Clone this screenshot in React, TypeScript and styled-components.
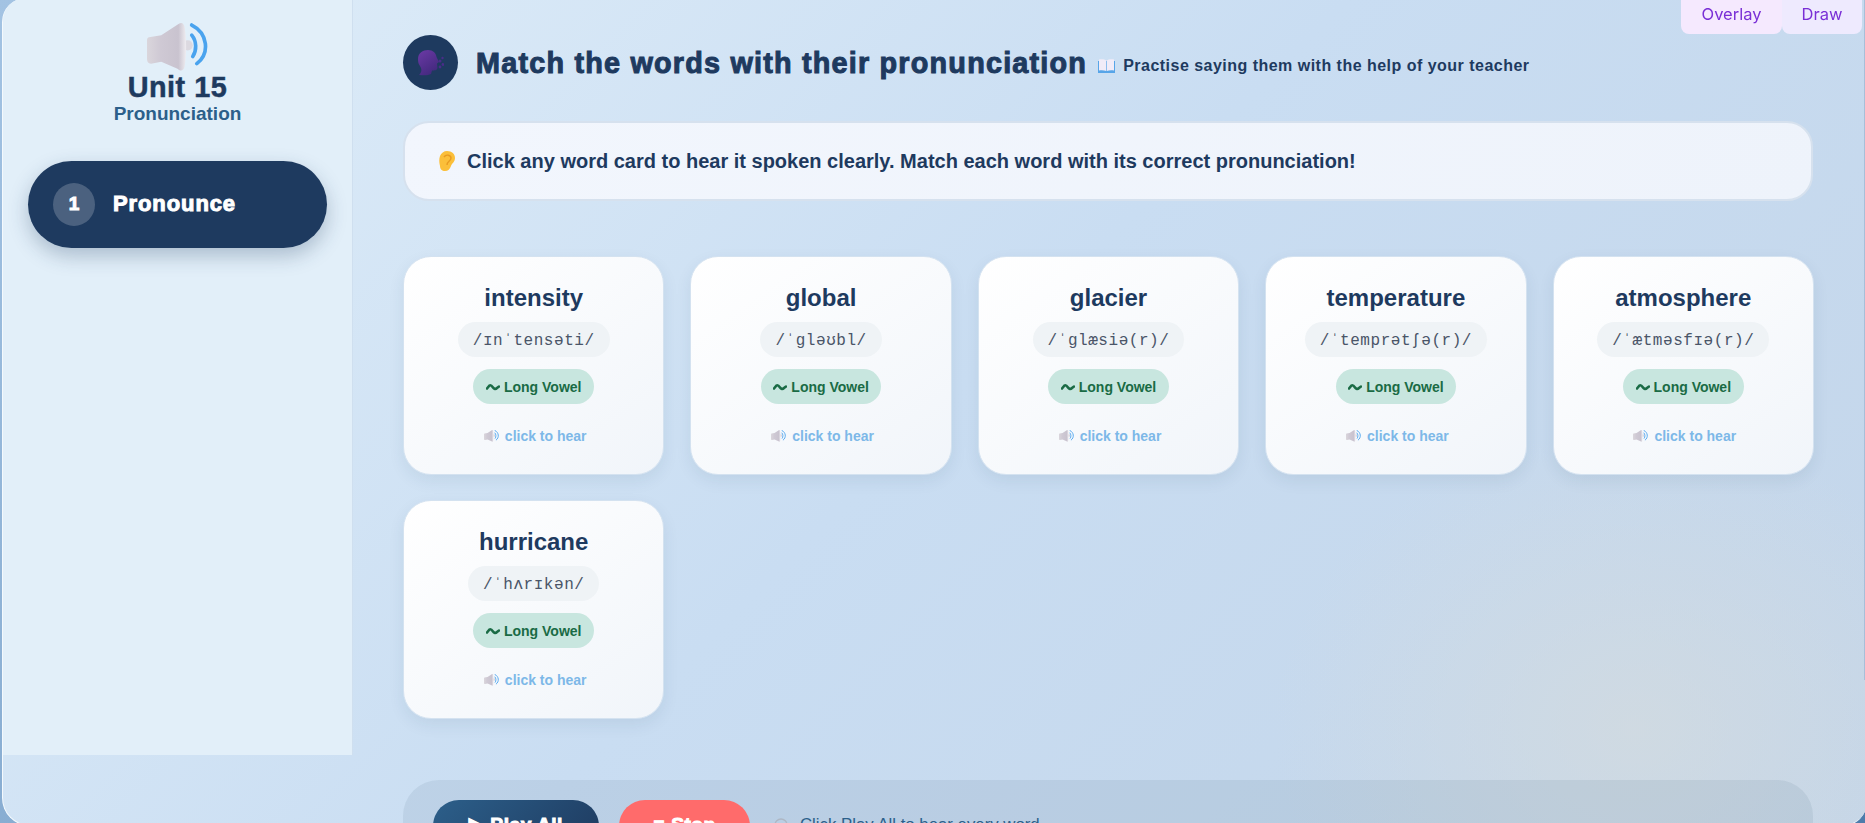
import React from 'react';
import styled, { createGlobalStyle, css } from 'styled-components';

const WORDS = [
  { word: 'intensity', ipa: '/ɪnˈtensəti/' },
  { word: 'global', ipa: '/ˈɡləʊbl/' },
  { word: 'glacier', ipa: '/ˈɡlæsiə(r)/' },
  { word: 'temperature', ipa: '/ˈtemprətʃə(r)/' },
  { word: 'atmosphere', ipa: '/ˈætməsfɪə(r)/' },
  { word: 'hurricane', ipa: '/ˈhʌrɪkən/' },
];

const GlobalStyle = createGlobalStyle`
  html, body {
    margin: 0;
    height: 823px;
    overflow: hidden;
    background: linear-gradient(135deg, #a3c3e3 0%, #4d7cab 100%);
    font-family: "Liberation Sans", Arial, sans-serif;
    color: #1e3a5f;
  }
`;

// the reference uses a black weight that falls back to a thickened bold
const heavy = css`
  font-weight: 700;
  -webkit-text-stroke: 1px currentColor;
`;

const Shell = styled.div`
  position: relative;
  display: flex;
  align-items: flex-start;
  box-sizing: border-box;
  width: 1865px;
  height: 828px;
  margin: -2px 0 0 2px;
  overflow: hidden;
  border-left: 1px solid #f4f9fd;
  border-bottom: 1px solid #f4f9fd;
  border-radius: 24px 6px 24px 28px;
  background:
    radial-gradient(ellipse 360px 300px at 1630px 730px, rgba(212, 219, 222, 0.7), rgba(212, 219, 222, 0) 100%),
    linear-gradient(135deg, #e0eef9 0%, #c9ddf2 50%, #c3d5e9 100%);

  &::after {
    content: '';
    position: absolute;
    top: 0;
    right: 2px;
    width: 1px;
    height: 682px;
    background: #a7bfd9;
  }
`;

const Sidebar = styled.aside`
  flex: none;
  box-sizing: border-box;
  width: 350px;
  height: 757px;
  padding: 25px 25px 0;
  border-right: 1px solid #cfdfef;
  background: #e2eff9;
`;

const Brand = styled.div`
  display: flex;
  flex-direction: column;
  align-items: center;
  margin-bottom: 36px;
`;

const UnitTitle = styled.h2`
  margin: 2px 0 0;
  font-size: 28.8px;
  line-height: 28px;
  letter-spacing: 0.5px;
  font-weight: 700;
  -webkit-text-stroke: 0.5px currentColor;
  color: #1e3a5f;
`;

const UnitSub = styled.div`
  margin-top: 2px;
  font-size: 19px;
  line-height: 22px;
  font-weight: 700;
  color: #2c5f8a;
`;

const NavPill = styled.div`
  display: flex;
  align-items: center;
  gap: 18px;
  box-sizing: border-box;
  width: 299px;
  height: 87px;
  padding-left: 25px;
  border-radius: 44px;
  background: #1e3a5f;
  box-shadow: 0 8px 20px rgba(30, 58, 95, 0.28);
  color: #fff;
`;

const NavNumber = styled.span`
  display: flex;
  align-items: center;
  justify-content: center;
  width: 42px;
  height: 43px;
  border-radius: 50%;
  background: rgba(255, 255, 255, 0.2);
  font-size: 19px;
  ${heavy}
`;

const NavLabel = styled.span`
  font-size: 22px;
  letter-spacing: 0.9px;
  ${heavy}
`;

const Main = styled.main`
  flex: 1;
  min-width: 0;
  padding: 37px 54px 0 50px;
`;

const TitleRow = styled.header`
  display: flex;
  align-items: center;
  height: 55px;
  margin-bottom: 31px;
`;

const TitleBadge = styled.span`
  display: flex;
  align-items: center;
  justify-content: center;
  flex: none;
  width: 55px;
  height: 55px;
  margin-right: 18px;
  border-radius: 50%;
  background: #1e3a5f;
`;

const Title = styled.h1`
  margin: 0 11px 0 0;
  font-size: 28.8px;
  line-height: 34px;
  letter-spacing: 1.2px;
  ${heavy}
`;

const Subtitle = styled.span`
  display: flex;
  align-items: center;
  gap: 8px;
  margin-top: 7px;
  font-size: 16px;
  font-weight: 700;
  letter-spacing: 0.48px;
`;

const InfoBox = styled.div`
  display: flex;
  align-items: center;
  gap: 12px;
  box-sizing: border-box;
  height: 80px;
  margin-bottom: 55px;
  padding-left: 34px;
  border: 2px solid #d6e1ee;
  border-radius: 26px;
  background: linear-gradient(135deg, #f2f6fd 0%, #eef3fb 100%);
  font-size: 20px;
  font-weight: 700;
`;

const CardGrid = styled.div`
  display: grid;
  grid-template-columns: repeat(5, 1fr);
  gap: 25px 26px;
  margin: 0 -1px 61px 0;
`;

const Card = styled.article`
  display: flex;
  flex-direction: column;
  align-items: center;
  box-sizing: border-box;
  height: 219px;
  padding-top: 27px;
  border: 1.5px solid #d4e2f0;
  border-radius: 28px;
  background: linear-gradient(145deg, #ffffff 0%, #f1f5fa 100%);
  box-shadow: 0 6px 16px rgba(30, 58, 95, 0.08);
`;

const Word = styled.div`
  font-size: 24px;
  line-height: 28px;
  font-weight: 700;
  color: #1e3a5f;
`;

const Phonetic = styled.div`
  display: flex;
  align-items: center;
  box-sizing: border-box;
  height: 35px;
  margin-top: 10px;
  padding: 2px 15px 0;
  border-radius: 18px;
  background: #eff3f6;
  font-family: "Liberation Mono", "DejaVu Sans Mono", monospace;
  font-size: 16px;
  letter-spacing: 0.55px;
  color: #4a5568;
`;

const TypeBadge = styled.div`
  display: flex;
  align-items: center;
  gap: 4px;
  height: 35px;
  margin-top: 12px;
  padding: 0 12.5px;
  border-radius: 18px;
  background: #c8e6df;
  font-size: 14px;
  font-weight: 700;
  color: #1a6b45;
`;

const Hear = styled.div`
  display: flex;
  align-items: center;
  gap: 6px;
  margin-top: 24px;
  padding-left: 3px;
  font-size: 14px;
  line-height: 16px;
  font-weight: 700;
  color: #7db8e8;
`;

const ControlBar = styled.div`
  display: flex;
  align-items: flex-start;
  gap: 20px;
  box-sizing: border-box;
  height: 90px;
  padding: 20px 30px;
  border-radius: 36px;
  background: rgba(30, 58, 95, 0.08);
`;

const PlayButton = styled.button<{ $stop?: boolean }>`
  width: ${p => (p.$stop ? '131px' : '166px')};
  height: 52px;
  padding: 0 0 3px;
  border: none;
  border-radius: 26px;
  background: ${p => (p.$stop ? '#ff6b6b' : 'linear-gradient(135deg, #2c5f8a 0%, #1e3a5f 100%)')};
  font-family: inherit;
  font-size: 19.2px;
  letter-spacing: 0.5px;
  color: #fff;
  ${heavy}
`;

const Hint = styled.span`
  display: flex;
  align-items: center;
  gap: 12px;
  margin: 15px 0 0 4px;
  font-size: 16.8px;
  line-height: 20px;
  color: #2c5f8a;
`;

const TopTab = styled.button<{ $tint: string; $width: number }>`
  width: ${p => p.$width}px;
  height: 34px;
  padding: 0 0 6px;
  border: none;
  border-radius: 0 0 8px 8px;
  background: ${p => p.$tint};
  font-family: Inter, sans-serif;
  font-size: 16.5px;
  color: #7a2fd6;
`;

const TopTabs = styled.div`
  position: fixed;
  top: 0;
  right: 3px;
  display: flex;
`;

const SpeakerIcon = ({ size }: { size: number }) => (
  <svg width={size} height={(size * 47) / 60} viewBox="0 0 60 47" aria-hidden="true">
    <defs>
      <linearGradient id="cone" x1="0" y1="0" x2="1" y2="0">
        <stop offset="0" stopColor="#dad6dc" />
        <stop offset="0.35" stopColor="#cfc9d4" />
        <stop offset="0.8" stopColor="#c9c3cf" />
        <stop offset="1" stopColor="#efedf1" />
      </linearGradient>
    </defs>
    <circle cx="40" cy="22" r="5" fill="#dcd9e0" />
    <path
      d="M2 14 L14 12 L31 1 C34 -1 36 0 37 4 C39 16 39 30 37 43 C36 47 33 48 30 45 L14 38 L4 40 C1 40 0 38 0 35 L0 17 C0 15 1 14 2 14 Z"
      fill="url(#cone)"
    />
    <path d="M44 12 C49 18 49 27 45 33" fill="none" stroke="#4aa3ee" strokeWidth="3.6" strokeLinecap="round" />
    <path d="M44 2 C60 10 62 30 49 40" fill="none" stroke="#4aa3ee" strokeWidth="3.6" strokeLinecap="round" />
  </svg>
);

const SpeakingHead = () => (
  <svg width="27" height="26" viewBox="0 0 27 26" aria-hidden="true">
    <defs>
      <linearGradient id="head" x1="0" y1="0" x2="0.6" y2="1">
        <stop offset="0" stopColor="#6c3aa6" />
        <stop offset="1" stopColor="#43297e" />
      </linearGradient>
    </defs>
    <path
      d="M1 9 C1 3 6 0 11 0 C16 0 19 3 19.5 7 L22 12 L20 13.5 L20.5 18 C20 20.5 17 20.5 15 20.5 L14 24 C10 26 6 25 2 25 C5 22 5 19 3 16 C1.5 14 1 12 1 9 Z"
      fill="url(#head)"
    />
    <circle cx="23" cy="11" r="1.5" fill="#4a2c8a" />
    <circle cx="26" cy="14.5" r="1.4" fill="#4a2c8a" />
    <circle cx="23" cy="17" r="1.4" fill="#4a2c8a" />
    <circle cx="25.5" cy="8" r="1.2" fill="#4a2c8a" />
  </svg>
);

const EarIcon = () => (
  <svg width="16" height="20" viewBox="0 0 16 20" aria-hidden="true">
    <path
      d="M8 0 C13 0 16 3 16 7 C16 11 13 12 12 15 C11 18 9 20 6 20 C3 20 1 18 1 15 C0 11 0 8 1 5 C2 2 5 0 8 0 Z"
      fill="#fbbf3a"
    />
    <path d="M5 6 C7 3 12 4 12 7 C12 10 8 10 8 14" fill="none" stroke="#e89b22" strokeWidth="1.4" />
  </svg>
);

const BookIcon = () => (
  <svg width="17" height="14" viewBox="0 0 17 14" aria-hidden="true">
    <path d="M0 2 L0 14 L17 14 L17 2 Z" fill="#57a5e8" />
    <path d="M1 0.5 C4 0 7 0.5 8.2 1.5 L8.2 12 C6 11 3 11 1 11.5 Z" fill="#f1ecf8" />
    <path d="M16 0.5 C13 0 10 0.5 8.8 1.5 L8.8 12 C11 11 14 11 16 11.5 Z" fill="#f1ecf8" />
  </svg>
);

const WaveIcon = () => (
  <svg width="14" height="8" viewBox="0 0 14 8" aria-hidden="true">
    <path d="M1 5.5 L3.5 2.5 C5 1.5 6 3 7 4.5 C8 6 9.5 6.5 11 5 L13 3.5" fill="none" stroke="#1a6b45" strokeWidth="2.6" strokeLinecap="round" />
  </svg>
);

const HintIcon = () => (
  <svg width="14" height="14" viewBox="0 0 14 14" aria-hidden="true">
    <circle cx="7" cy="7" r="6" fill="none" stroke="#aeb7c4" strokeWidth="1.4" />
  </svg>
);

export default function App() {
  return (
    <>
      <GlobalStyle />
      <Shell>
        <Sidebar>
          <Brand>
            <SpeakerIcon size={61} />
            <UnitTitle>Unit 15</UnitTitle>
            <UnitSub>Pronunciation</UnitSub>
          </Brand>
          <NavPill>
            <NavNumber>1</NavNumber>
            <NavLabel>Pronounce</NavLabel>
          </NavPill>
        </Sidebar>
        <Main>
          <TitleRow>
            <TitleBadge>
              <SpeakingHead />
            </TitleBadge>
            <Title>Match the words with their pronunciation</Title>
            <Subtitle>
              <BookIcon />
              Practise saying them with the help of your teacher
            </Subtitle>
          </TitleRow>
          <InfoBox>
            <EarIcon />
            Click any word card to hear it spoken clearly. Match each word with its correct pronunciation!
          </InfoBox>
          <CardGrid>
            {WORDS.map(item => (
              <Card key={item.word}>
                <Word>{item.word}</Word>
                <Phonetic>{item.ipa}</Phonetic>
                <TypeBadge>
                  <WaveIcon />
                  Long Vowel
                </TypeBadge>
                <Hear>
                  <SpeakerIcon size={15} />
                  click to hear
                </Hear>
              </Card>
            ))}
          </CardGrid>
          <ControlBar>
            <PlayButton>▶ Play All</PlayButton>
            <PlayButton $stop>■ Stop</PlayButton>
            <Hint>
              <HintIcon />
              Click Play All to hear every word
            </Hint>
          </ControlBar>
        </Main>
      </Shell>
      <TopTabs>
        <TopTab $tint="#f5e9fe" $width={101}>Overlay</TopTab>
        <TopTab $tint="#eeeafe" $width={80}>Draw</TopTab>
      </TopTabs>
    </>
  );
}
